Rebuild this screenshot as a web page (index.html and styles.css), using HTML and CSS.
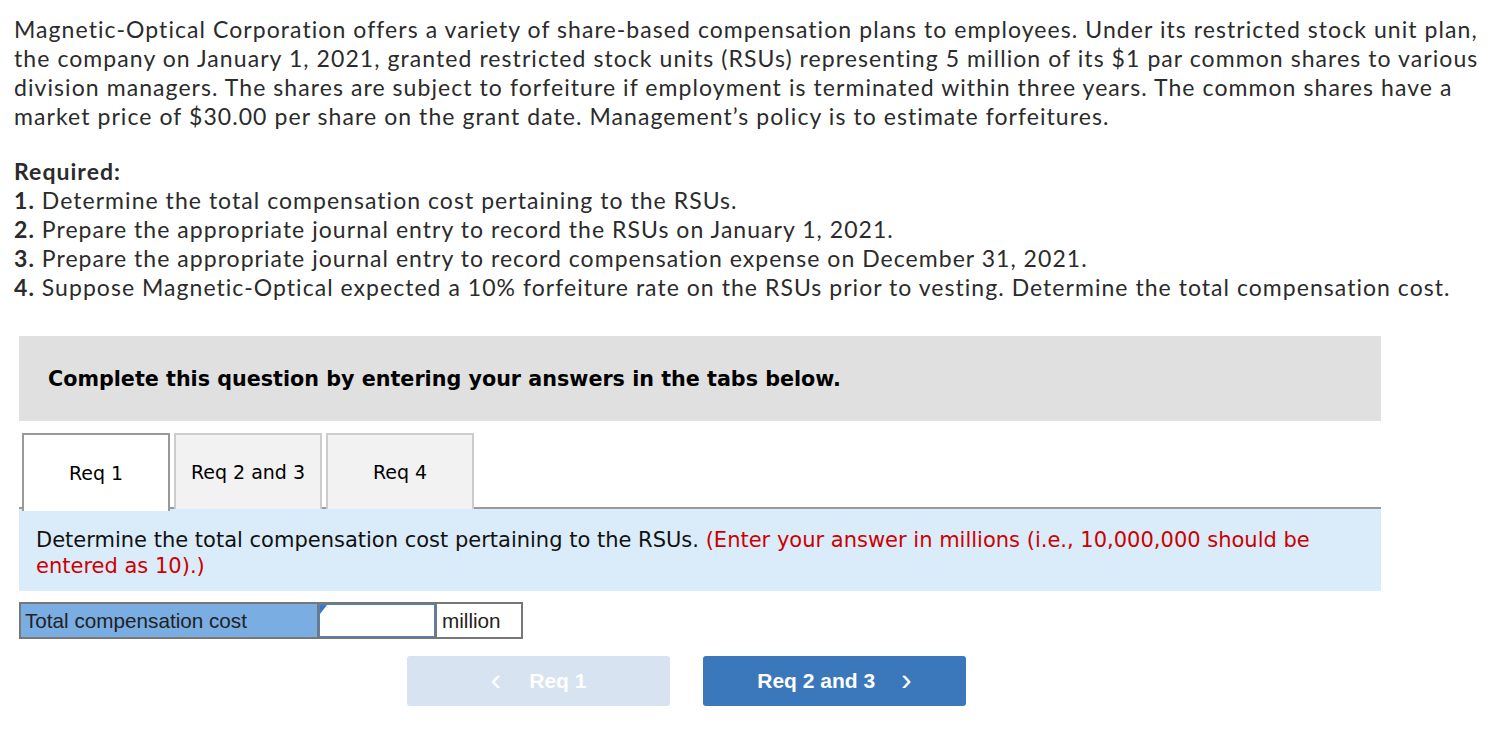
FILE: index.html
```html
<!DOCTYPE html>
<html>
<head>
<meta charset="utf-8">
<link rel="stylesheet" href="styles.css">
</head>
<body>
<div class="page">
  <p class="intro">Magnetic-Optical Corporation offers a variety of share-based compensation plans to employees. Under its restricted stock unit plan,<br>the company on January 1, 2021, granted restricted stock units (RSUs) representing 5 million of its $1 par common shares to various<br>division managers. The shares are subject to forfeiture if employment is terminated within three years. The common shares have a<br>market price of $30.00 per share on the grant date. Management’s policy is to estimate forfeitures.</p>
  <div class="required">
    <div class="req-title">Required:</div>
    <div><b>1.</b> Determine the total compensation cost pertaining to the RSUs.</div>
    <div><b>2.</b> Prepare the appropriate journal entry to record the RSUs on January 1, 2021.</div>
    <div><b>3.</b> Prepare the appropriate journal entry to record compensation expense on December 31, 2021.</div>
    <div><b>4.</b> Suppose Magnetic-Optical expected a 10% forfeiture rate on the RSUs prior to vesting. Determine the total compensation cost.</div>
  </div>

  <div class="question">
    <div class="banner">Complete this question by entering your answers in the tabs below.</div>
    <div class="tabs">
      <div class="tab active">Req 1</div>
      <div class="tab">Req 2 and 3</div>
      <div class="tab">Req 4</div>
    </div>
    <div class="instructions">Determine the total compensation cost pertaining to the RSUs. <span class="hint">(Enter your answer in millions (i.e., 10,000,000 should be entered as 10).)</span></div>
    <div class="answer-row">
      <div class="cell label">Total compensation cost</div>
      <div class="cell input"><span class="marker"></span></div>
      <div class="cell unit">million</div>
    </div>
    <div class="nav">
      <div class="btn prev"><span class="chev">&lsaquo;</span>Req 1</div>
      <div class="btn next">Req 2 and 3<span class="chev">&rsaquo;</span></div>
    </div>
  </div>
</div>
</body>
</html>
```
FILE: styles.css
```css
* { box-sizing: border-box; }
body { margin: 0; background: #fff; }
.page { padding: 15px 14px 0 14px; }
.intro {
  margin: 0;
  font-family: "Lato", sans-serif;
  font-size: 23px;
  line-height: 29px;
  letter-spacing: 1.07px;
  color: #2b2b2b;
  white-space: nowrap;
}
.required {
  margin-top: 26px;
  font-family: "Lato", sans-serif;
  font-size: 23px;
  line-height: 29px;
  letter-spacing: 1.04px;
  color: #2b2b2b;
  white-space: nowrap;
}
.req-title { font-weight: bold; }
.required b { font-weight: bold; }
.question { margin: 34px 0 0 5px; width: 1362px; }
.banner {
  background: #e0e0e0;
  height: 85px;
  display: flex;
  align-items: center;
  padding-left: 29px;
  font-family: "DejaVu Sans", Verdana, sans-serif;
  font-weight: bold;
  font-size: 20.7px;
  color: #000;
}
.tabs {
  display: flex;
  gap: 4px;
  margin-top: 12px;
  padding-left: 3px;
  border-bottom: 2px solid #999;
  height: 76px;
}
.tab {
  width: 148px;
  height: 76px;
  display: flex;
  align-items: center;
  justify-content: center;
  background: #f2f2f2;
  border: 2px solid #ccc;
  border-bottom: none;
  font-family: "DejaVu Sans", Verdana, sans-serif;
  font-size: 19px;
  color: #000;
}
.tab.active {
  background: #fff;
  border-color: #999;
  height: 78px;
  margin-bottom: -2px;
}
.instructions {
  background: #daecf9;
  padding: 18px 17px 8px 17px;
  height: 82px;
  font-family: "DejaVu Sans", Verdana, sans-serif;
  font-size: 21px;
  line-height: 26px;
  color: #111;
}
.hint { color: #c00; }
.answer-row {
  display: flex;
  margin-top: 11px;
  height: 37px;
  font-family: "Liberation Sans", Arial, sans-serif;
  font-size: 20.7px;
}
.cell { border: 2px solid #777; display: flex; align-items: center; }
.label {
  width: 300px;
  background: #7aade2;
  color: #222;
  padding-left: 4px;
}
.input {
  width: 118px;
  border: 2px solid #777;
  border-left: none;
  position: relative;
  background: #fff;
  box-shadow: inset 0 0 0 1px #4a84c8;
}
.marker {
  position: absolute;
  top: 1px; left: 1px;
  width: 0; height: 0;
  border-top: 0 solid transparent;
  border-bottom: 9px solid transparent;
  border-left: 7px solid #3a77bb;
}
.unit {
  width: 86px;
  border-left: none;
  padding-left: 5px;
  color: #222;
}
.nav {
  display: flex;
  gap: 33px;
  margin-top: 17px;
  padding-left: 388px;
}
.btn {
  width: 263px;
  height: 50px;
  border-radius: 3px;
  display: flex;
  align-items: center;
  justify-content: center;
  font-family: "Liberation Sans", Arial, sans-serif;
  font-weight: bold;
  font-size: 21px;
  color: #fff;
}
.prev { background: #d7e3f1; }
.next { background: #3a77bb; }
.chev { font-size: 32px; font-weight: normal; line-height: 1; margin-top: -4px; }
.prev .chev { margin-right: 28px; }
.next .chev { margin-left: 26px; }
```
